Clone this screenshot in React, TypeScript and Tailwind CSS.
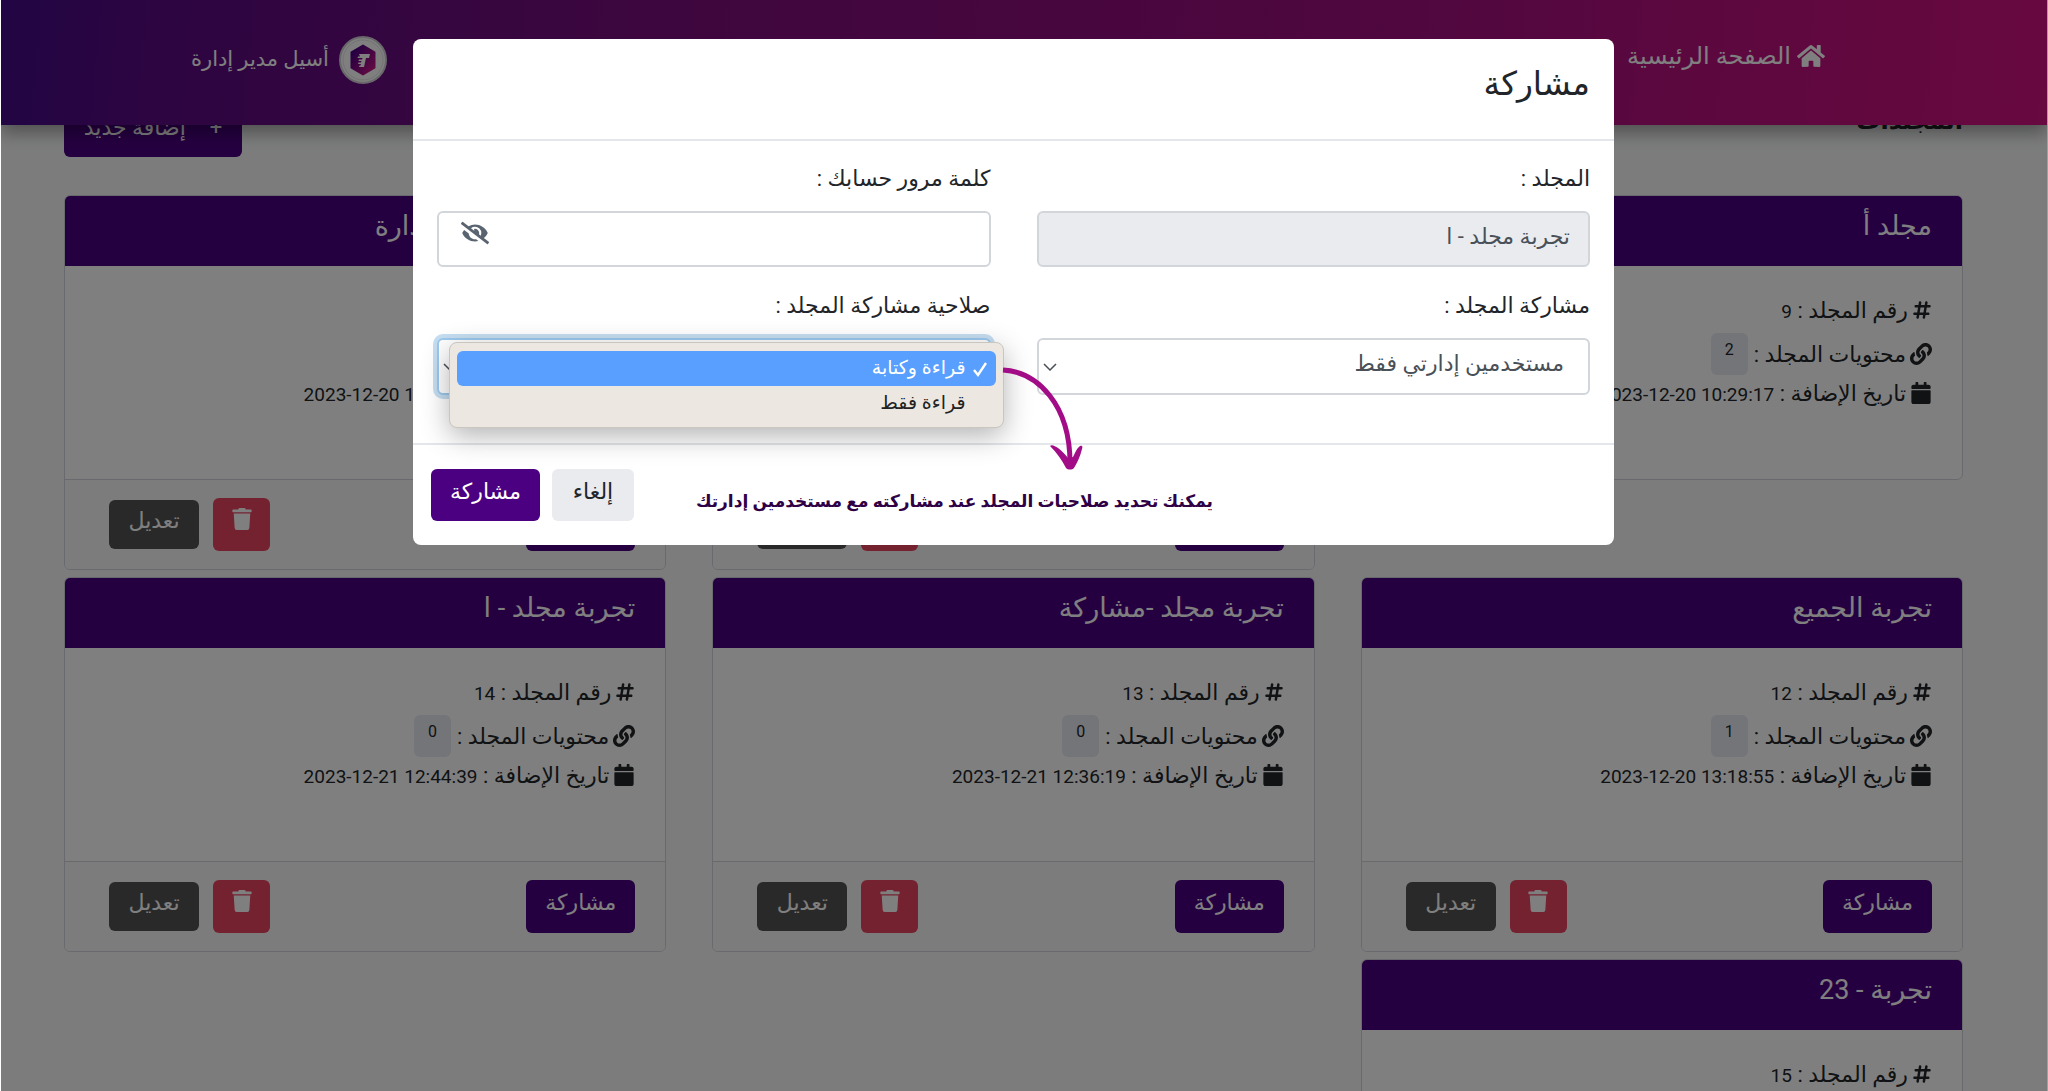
import { useState } from "react";
import { FaHashtag } from "react-icons/fa6";
import { FaCalendar, FaEyeSlash, FaHome, FaLink, FaTrash } from "react-icons/fa";

interface Folder {
  id: number;
  title: string;
  count: number;
  date: string;
  owned: boolean;
}

const folders: Folder[] = [
  { id: 9, title: "مجلد أ", count: 2, date: "2023-12-20 10:29:17", owned: false },
  { id: 10, title: "مجلد ب", count: 0, date: "2023-12-20 10:31:42", owned: true },
  { id: 11, title: "مجلد مشاركة مع الإدارة", count: 1, date: "2023-12-20 13:10:25", owned: true },
  { id: 12, title: "تجربة الجميع", count: 1, date: "2023-12-20 13:18:55", owned: true },
  { id: 13, title: "تجربة مجلد -مشاركة", count: 0, date: "2023-12-21 12:36:19", owned: true },
  { id: 14, title: "تجربة مجلد - ا", count: 0, date: "2023-12-21 12:44:39", owned: true },
  { id: 15, title: "تجربة - 23", count: 0, date: "2023-12-21 12:50:08", owned: true },
];

const permissions = ["قراءة وكتابة", "قراءة فقط"];

function Navbar() {
  return (
    <header className="absolute inset-x-0 top-0 z-10 flex h-[125px] items-start justify-between bg-linear-[95deg,#440a88,#5a0a82_8%,#6c0c80_22%,#7c0c7c_32%,#a20e7e_70%,#b4107e_80%,#d01280] pr-[222px] pl-[190px] text-white shadow-[0_8px_16px_rgba(0,0,0,0.35)]">
      <a href="#" className="mt-10 flex items-center gap-1.5 text-2xl">
        <FaHome className="size-7" />
        الصفحة الرئيسية
      </a>
      <div className="mt-9 flex items-center gap-2.5 text-[21px]">
        <Logo />
        أسيل مدير إدارة
      </div>
    </header>
  );
}

function Logo() {
  return (
    <svg viewBox="0 0 48 48" className="size-12" aria-hidden="true">
      <defs>
        <linearGradient id="logo" x1="0" y1="0" x2="1" y2="1">
          <stop offset="0.15" stopColor="#4b0082" />
          <stop offset="0.9" stopColor="#c71585" />
        </linearGradient>
      </defs>
      <circle cx="24" cy="24" r="23" fill="#fff" stroke="#d0d0d4" strokeWidth="2" />
      <circle cx="24" cy="24" r="20" fill="none" stroke="#e6e6ea" />
      <path
        d="M24 9.500l11.500 6.800v15.400L24 38.500l-11.500-6.800V16.300z"
        fill="url(#logo)"
        stroke="url(#logo)"
        strokeWidth="2"
        strokeLinejoin="round"
      />
      <path d="M20 18h11l-1 4h-3l-2 9h-5l.5-1.500h1l.5-1.500h-3l.5-1.500h2.500l.5-1.500h-3l.5-1.500h3l.5-1.500h-5l.5-1.500h2z" fill="#fff" />
    </svg>
  );
}

function FolderCard({ folder }: { folder: Folder }) {
  return (
    <article className="overflow-hidden rounded-md border border-gray-300 bg-white">
      <h2 className="h-[70px] bg-[#4b0082] px-[30px] pt-2.5 text-[27px] text-white">{folder.title}</h2>
      <div className="flex h-[213px] flex-col px-[30px] pt-[23px] text-[22px] text-[#212529]">
        <p className="flex h-[42px] items-center gap-1">
          <FaHashtag className="size-5" />
          <span>
            رقم المجلد : <span className="text-[19px]">{folder.id}</span>
          </span>
        </p>
        <p className="flex h-[46px] items-center gap-1">
          <FaLink className="size-[22px]" />
          محتويات المجلد :
          <span className="mr-0.5 flex h-[42px] items-center rounded-md bg-[#e9ebf0] px-3.5 pb-2 text-base">
            {folder.count}
          </span>
        </p>
        <p className="flex h-8 items-center gap-1">
          <FaCalendar className="size-[22px]" />
          <span>
            تاريخ الإضافة : <bdi className="text-[19px]">{folder.date}</bdi>
          </span>
        </p>
      </div>
      {folder.owned && (
        <div className="flex h-[90px] items-center gap-3.5 border-t border-gray-300 bg-[#f8f9fa] pr-[30px] pl-11 text-[22px] text-white">
          <button className="ml-auto h-[53px] w-[109px] rounded-md bg-[#4b0082] pb-2">مشاركة</button>
          <button aria-label="حذف" className="flex h-[53px] w-[57px] justify-center rounded-md bg-[#ea4560] pt-2.5">
            <FaTrash className="size-[22px]" />
          </button>
          <button className="h-[49px] w-[90px] rounded-md bg-[#525252] pb-2">تعديل</button>
        </div>
      )}
    </article>
  );
}

function PermissionSelect() {
  const [permission, setPermission] = useState(permissions[0]);

  return (
    <div className="relative">
      <label htmlFor="permission" className="block h-14 pt-[7px]">
        صلاحية مشاركة المجلد :
      </label>
      <select
        id="permission"
        value={permission}
        onChange={(e) => setPermission(e.target.value)}
        className="block h-[57px] w-full appearance-none rounded-md border-2 border-[#9dc9ee] bg-white px-6 text-[#495057] ring-4 ring-[#c6def2]"
      >
        {permissions.map((p) => (
          <option key={p}>{p}</option>
        ))}
      </select>
      <Chevron />

      {/* opened list */}
      <div
        role="listbox"
        className="absolute top-[60px] -right-[13px] left-3 z-10 h-[86px] rounded-lg border border-[#c9c5bf] bg-[#ece7e1] px-[7px] pt-2 text-[19px] text-[#222] shadow-[0_8px_28px_rgba(0,0,0,0.3)]"
      >
        {permissions.map((p) => (
          <button
            key={p}
            role="option"
            aria-selected={p === permission}
            onClick={() => setPermission(p)}
            className={`flex h-[35px] w-full items-center gap-1.5 rounded-md px-2 ${
              p === permission ? "bg-[#589fff] text-white" : ""
            }`}
          >
            <svg viewBox="0 0 16 16" className="size-4" fill="none" stroke="currentColor" strokeWidth="2.4">
              {p === permission && <path d="M2 9l4 5 8-12" />}
            </svg>
            {p}
          </button>
        ))}
      </div>
    </div>
  );
}

function Chevron() {
  return (
    <svg
      viewBox="0 0 14 8"
      className="pointer-events-none absolute bottom-6 left-1.5 w-3.5"
      fill="none"
      stroke="#495057"
      strokeWidth="1.5"
    >
      <path d="M1 1l6 6 6-6" />
    </svg>
  );
}

// curved arrow from the opened list down to the hint
function HintArrow() {
  return (
    <svg
      viewBox="0 0 84 106"
      className="absolute -top-20 right-[530px] z-20 w-[84px]"
      fill="none"
      aria-hidden="true"
    >
      <path d="M3 5C38 7 70 40 70 98" stroke="#a20c86" strokeWidth="5" />
      <path
        d="M50 81c2-2 5 0 8 2 4 3 7 6 10 10l5-1c2-4 4-9 7-11 2-1 3 0 2 3-2 8-5 14-8 19-2 2-6 2-8 0-4-8-9-15-16-22z"
        fill="#a20c86"
      />
    </svg>
  );
}

function ShareModal() {
  return (
    <div className="absolute inset-0 z-20 flex items-start justify-center bg-black/50 pt-[39px] pr-[21px]">
      <div
        role="dialog"
        aria-labelledby="share-title"
        className="w-full max-w-[1201px] rounded-lg bg-white text-[22px] text-[#212529]"
      >
        <h2 id="share-title" className="h-[102px] border-b-2 border-[#e3e6ea] px-6 pt-5 text-[33px]">
          مشاركة
        </h2>
        <div className="grid grid-cols-2 gap-x-[46px] px-6 pt-3.5 pb-12">
          <div>
            <label htmlFor="folder" className="block h-14 pt-[7px]">
              المجلد :
            </label>
            <input
              id="folder"
              readOnly
              value="تجربة مجلد - ا"
              className="block h-[56px] w-full rounded-md border-2 border-[#d2d6db] bg-[#e9ebef] px-[18px] pb-1.5 text-[#495057]"
            />
          </div>
          <div className="relative">
            <label htmlFor="password" className="block h-14 pt-[7px]">
              كلمة مرور حسابك :
            </label>
            <input
              id="password"
              type="password"
              className="block h-[56px] w-full rounded-md border-2 border-[#d2d6db] px-[18px]"
            />
            <button aria-label="إظهار كلمة المرور" className="absolute bottom-5 left-6 text-[#5a6470]">
              <FaEyeSlash className="size-7" />
            </button>
          </div>
          <div className="relative mt-[15px]">
            <label htmlFor="audience" className="block h-14 pt-[7px]">
              مشاركة المجلد :
            </label>
            <select
              id="audience"
              className="block h-[57px] w-full appearance-none rounded-md border-2 border-[#d2d6db] bg-white px-6 pb-1.5 text-[#495057]"
            >
              <option>مستخدمين إدارتي فقط</option>
            </select>
            <Chevron />
          </div>
          <div className="mt-[15px]">
            <PermissionSelect />
          </div>
        </div>
        <div className="relative flex h-[102px] items-start gap-3 border-t-2 border-[#e3e6ea] pt-6 pr-[401px] pl-[18px]">
          <HintArrow />
          <p className="ml-auto pt-5 text-[17px] font-bold whitespace-nowrap text-[#2f0045]">
            يمكنك تحديد صلاحيات المجلد عند مشاركته مع مستخدمين إدارتك
          </p>
          <button className="h-[52px] w-[82px] rounded-md bg-[#e9ebef] pb-2">إلغاء</button>
          <button className="h-[52px] w-[109px] rounded-md bg-[#4b0082] pb-2 text-white">مشاركة</button>
        </div>
      </div>
    </div>
  );
}

export default function App() {
  return (
    <div
      dir="rtl"
      className="relative h-screen overflow-hidden border-x border-r-gray-400 border-l-white bg-[#f8f9fa] font-['Roboto','DejaVu_Sans',sans-serif]"
    >
      <Navbar />
      <main className="pt-[105px] pr-[84px] pl-[63px]">
        <div className="mb-[38px] flex items-start justify-between">
          <h1 className="text-2xl font-bold text-[#212529]">المجلدات</h1>
          <button className="flex h-[52px] w-[178px] items-center justify-center gap-6 rounded-md bg-[#4b0082] pb-2 text-[22px] text-white">
            <span>+</span>
            إضافة جديد
          </button>
        </div>
        <div className="grid grid-cols-3 items-start gap-x-[46px] gap-y-[7px]">
          {folders.map((folder) => (
            <FolderCard key={folder.id} folder={folder} />
          ))}
        </div>
      </main>
      <ShareModal />
    </div>
  );
}
